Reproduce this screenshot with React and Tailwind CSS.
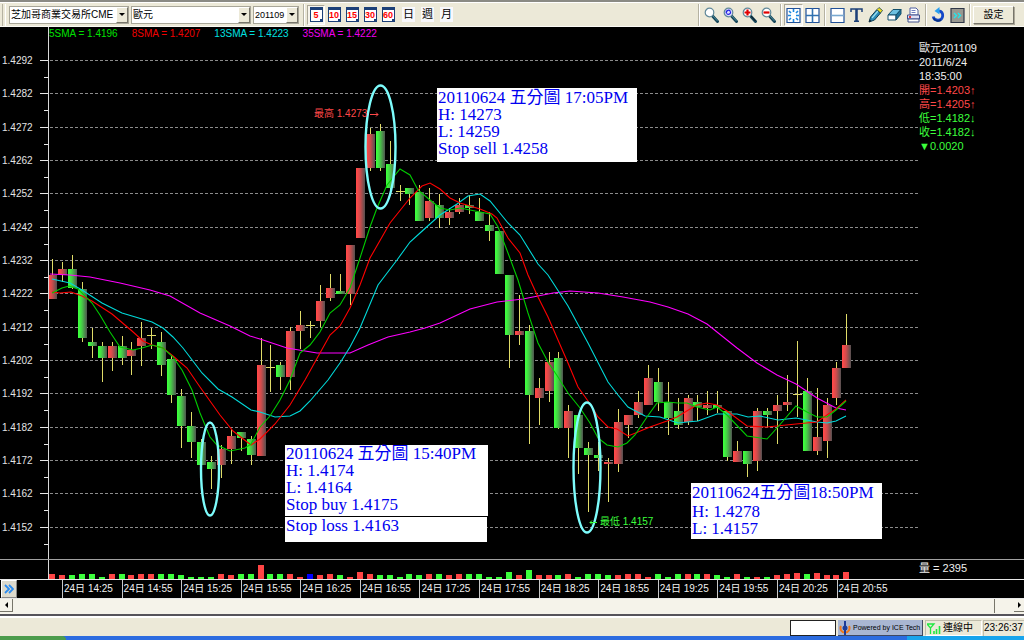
import React from 'react';

const SANS = 'font-["Liberation_Sans","Noto_Sans_CJK_TC",sans-serif]';

// [colour, high, body top, body bottom, low] in pips above 1.4000; r = up, g = down, d = doji
const CANDLES = [
  ['r', 232.3, 227.5, 220.3, 220.3], ['r', 231.5, 229.3, 227.4, 225.4], ['g', 233.6, 229.4, 223.5, 223.5],
  ['g', 225.5, 223.4, 208.5, 207.5], ['g', 211.7, 207.4, 206.3, 202.7], ['g', 207.4, 206.3, 202.5, 195.4],
  ['r', 207.3, 206.3, 202.5, 198.6], ['g', 209.2, 206.3, 202.5, 200.4], ['r', 207.4, 205.1, 203.3, 197.4],
  ['r', 213.5, 208.5, 206.3, 200.4], ['d', 211.7, 209.5, 209.5, 205.3], ['g', 210.5, 207.4, 200.4, 197.4],
  ['g', 203.3, 202.4, 191.4, 189.3], ['g', 193.3, 191.3, 182.3, 175.5], ['g', 186.4, 182.3, 177.4, 172.5],
  ['g', 178.3, 177.3, 170.6, 170.6], ['g', 173.3, 171.3, 169.4, 163.5], ['r', 176.6, 175.3, 170.6, 166.6],
  ['r', 181.2, 179.3, 175.4, 170.7], ['g', 180.4, 180.4, 178.6, 174.6], ['g', 179.3, 178.4, 173.4, 170.7],
  ['r', 208.7, 200.5, 173.3, 173.3], ['d', 206.5, 199.8, 199.8, 192.5], ['g', 201.5, 200.5, 196.8, 193.0],
  ['r', 211.8, 210.7, 196.8, 193.0], ['r', 216.8, 212.5, 210.7, 205.3], ['d', 213.7, 212.6, 212.6, 208.6],
  ['r', 224.5, 219.7, 213.8, 211.8], ['r', 227.8, 223.6, 220.5, 219.7], ['g', 227.8, 222.7, 221.7, 221.7],
  ['r', 236.5, 236.5, 221.9, 218.6], ['r', 259.6, 259.6, 238.5, 238.5], ['r', 271.6, 269.8, 259.6, 258.8],
  ['g', 272.8, 270.6, 259.6, 258.8], ['g', 267.6, 260.8, 253.6, 251.5], ['d', 254.6, 252.8, 252.8, 249.8],
  ['g', 253.6, 253.6, 251.7, 248.5], ['g', 254.5, 252.5, 243.8, 243.8], ['r', 253.6, 249.7, 244.6, 243.8],
  ['g', 251.7, 248.5, 244.6, 241.6], ['r', 247.5, 246.5, 244.6, 242.5], ['r', 250.5, 248.5, 246.5, 245.7],
  ['g', 251.5, 248.5, 247.5, 245.7], ['g', 250.5, 246.5, 243.8, 243.8], ['g', 246.5, 242.5, 240.7, 237.8],
  ['g', 240.7, 240.7, 227.8, 227.8], ['g', 227.6, 227.6, 209.4, 199.6], ['r', 221.6, 210.6, 209.4, 206.6],
  ['g', 212.5, 210.6, 191.4, 176.8], ['r', 196.7, 193.5, 190.5, 182.5], ['r', 204.5, 201.4, 192.6, 189.6],
  ['g', 204.5, 202.6, 181.5, 181.5], ['r', 188.5, 186.6, 181.5, 172.7], ['g', 185.4, 185.4, 175.5, 167.7],
  ['g', 177.5, 175.5, 173.4, 156.4], ['g', 177.5, 173.4, 172.6, 168.7], ['r', 172.7, 171.4, 170.7, 159.4],
  ['r', 187.4, 183.5, 170.7, 168.6], ['r', 185.4, 185.4, 182.4, 178.6], ['r', 192.6, 189.5, 185.4, 184.6],
  ['r', 200.4, 196.7, 188.4, 188.4], ['g', 199.6, 195.5, 189.5, 186.7], ['g', 195.5, 189.5, 184.5, 179.5],
  ['g', 190.7, 186.6, 182.4, 181.5], ['r', 191.4, 190.6, 183.5, 182.4], ['g', 191.4, 189.5, 187.9, 183.6],
  ['r', 192.6, 188.5, 187.6, 185.5], ['g', 192.7, 188.5, 187.6, 186.0], ['g', 186.7, 186.7, 172.8, 171.6],
  ['r', 177.7, 174.7, 171.5, 171.5], ['g', 174.7, 174.7, 170.8, 166.8], ['r', 187.6, 186.7, 171.6, 168.7],
  ['g', 187.6, 186.7, 185.5, 182.0], ['r', 191.5, 188.5, 186.7, 176.8], ['r', 197.5, 189.5, 188.6, 186.7],
  ['d', 207.6, 191.7, 191.7, 184.8], ['g', 196.7, 192.7, 174.7, 174.7], ['r', 193.6, 178.8, 174.7, 173.6],
  ['r', 190.7, 188.5, 177.6, 172.8], ['r', 201.5, 199.6, 190.7, 188.7], ['r', 215.7, 206.5, 199.6, 199.6],
];

const VOLUMES =
  'r5 r4 g4 g5 g5 g2 r5 g5 r4 r5 r5 g5 g5 g4 g2 g2 g2 r5 r4 g5 g5 r14 g5 g5 r5 r2 b5 r4 r5 g4 r2 r7 r5 g4 g4 g2 g5 g4 r5 g5 r4 r5 g5 g5 g2 g2 g7 r4 g9 r4 r4 g4 r5 g2 g5 g5 g4 r4 r5 r5 r2 g5 g2 g5 r5 g5 r5 g4 g2 r5 g2 r2 g2 r4 r5 r6 g5 r6 r4 r4 r7'
    .split(' ')
    .map((v) => [v[0], Number(v.slice(1))]);

const AVERAGES = [
  {
    color: '#f0f',
    points: '50,274 70,275 90,277 120,283 150,290 170,296 200,313 230,326 250,336 260,339 287,348 317,353 350,353 368,345 388,337 410,332 425,328 440,323 470,309 497,302 523,299 553,293 570,291 598,293 623,297 650,302 668,307 688,314 707,324 737,348 757,363 777,375 796,384 817,398 836,408 846,410',
  },
  {
    color: '#00dada',
    points: '52,279 70,283 82,290 102,303 122,313 142,319 152,322 163,328 173,337 183,348 202,373 218,389 232,397 251,410 260,412 275,417 290,416 300,411 310,401 328,380 340,363 350,347 360,328 378,285 397,260 410,242 420,233 440,215 457,204 468,196 480,194 490,201 508,223 520,235 538,264 548,275 568,306 588,343 608,382 618,395 628,407 645,416 660,417 678,423 687,422 698,421 717,414 737,414 748,417 760,416 778,420 796,418 817,422 827,423 836,421 846,416',
  },
  {
    color: '#f00',
    points: '52,292 60,293 71,292 82,296 92,301 112,314 132,331 143,341 152,345 163,348 173,356 187,368 200,387 220,415 233,431 251,445 260,439 275,424 290,405 305,380 320,353 330,335 340,326 350,308 360,285 370,258 390,223 410,198 422,186 430,183 440,189 450,198 460,203 480,209 492,214 497,218 508,238 520,253 528,275 538,297 548,317 558,340 568,363 578,387 588,401 598,417 608,427 617,429 628,436 638,432 650,427 667,421 677,417 690,409 697,405 707,403 717,405 727,411 747,426 767,427 796,424 817,422 827,415 836,409 846,400',
  },
  {
    color: '#0c0',
    points: '52,293 62,288 69,286 78,289 92,303 100,315 110,332 120,347 133,350 142,348 152,345 163,348 173,357 182,370 192,390 200,413 210,437 217,445 230,451 245,448 251,444 260,427 270,416 280,400 290,380 300,353 310,345 320,332 330,313 340,305 350,288 360,258 370,227 377,208 387,185 400,169 410,175 418,190 430,200 440,208 450,210 460,208 480,212 490,214 498,227 508,253 518,280 528,313 538,343 548,362 558,377 568,393 580,408 590,423 598,438 607,445 618,447 627,443 635,435 647,417 657,403 667,402 678,403 687,403 697,407 710,410 717,407 727,415 747,436 767,439 777,428 796,406 807,412 817,417 827,417 836,410 846,401',
  },
];

const LEGEND = [
  ['5SMA = 1.4196', 'text-[#00e000]'],
  ['8SMA = 1.4207', 'text-[#f00000]'],
  ['13SMA = 1.4223', 'text-[#00e0e0]'],
  ['35SMA = 1.4222', 'text-[#f000f0]'],
];

const TIMES = ['14:25', '14:55', '15:25', '15:55', '16:25', '16:55', '17:25', '17:55', '18:25', '18:55', '19:25', '19:55', '20:25', '20:55'];

const LEVELS = Array.from({ length: 15 }, (_, i) => 292 - i * 10);

const VOLUME_FILL = { r: '#ff4545', g: '#3cff3c', b: '#0000ff' };

const TOP = 27;
const xAt = (i) => 52 + i * 9.93;
const yAt = (pips) => 60 + (292 - pips) * 3.333;

function Candle({ candle, index }) {
  const [kind, high, top, bottom, low] = candle;
  const x = Math.round(xAt(index));
  const y = Math.round(yAt(top));
  return (
    <g>
      <rect x={x} y={Math.round(yAt(high))} width="1" height={Math.round((high - low) * 3.333)} fill="#e0dc68" />
      {kind === 'd' ? (
        <rect x={x - 4} y={y} width="9" height="1" fill="#e0dc68" />
      ) : (
        <rect x={x - 4} y={y} width="9" height={Math.max(2, Math.round(yAt(bottom)) - y)} fill={kind === 'r' ? 'url(#up)' : 'url(#down)'} />
      )}
    </g>
  );
}

function Chart() {
  return (
    <svg className="block h-[532px] w-full" role="img" aria-label="歐元 201109 K線圖">
      <defs>
        <linearGradient id="up">
          <stop offset="0.1" stopColor="#ff4848" />
          <stop offset="0.45" stopColor="#d04c4c" />
          <stop offset="1" stopColor="#545050" />
        </linearGradient>
        <linearGradient id="down">
          <stop offset="0.1" stopColor="#3cff3c" />
          <stop offset="0.45" stopColor="#48c848" />
          <stop offset="1" stopColor="#505450" />
        </linearGradient>
      </defs>
      <g transform={`translate(0 ${-TOP})`} shapeRendering="crispEdges">
        {LEVELS.map((level) => {
          const y = Math.round(yAt(level));
          return (
            <g key={level}>
              <line x1="50" x2="100%" y1={y + 0.5} y2={y + 0.5} stroke="#8c8c8c" strokeDasharray="3 2" />
              <rect x="40" y={y} width="8" height="1" fill="#e8e8e8" />
              <rect x="44" y={y + 17} width="4" height="1" fill="#e8e8e8" />
            </g>
          );
        })}
        {CANDLES.map((candle, i) => (
          <Candle key={i} candle={candle} index={i} />
        ))}
        <rect x="48" y="27" width="1" height="532" fill="#d8d8d8" />
      </g>
      <g transform={`translate(0 ${-TOP})`} fill="none">
        {AVERAGES.map((avg) => (
          <polyline key={avg.color} points={avg.points} stroke={avg.color} strokeWidth="1.1" />
        ))}
        <g stroke="#7dfcfc" strokeWidth="2.4">
          <ellipse cx="380.5" cy="147" rx="15" ry="61.5" />
          <ellipse cx="210" cy="469" rx="9" ry="46.5" />
          <ellipse cx="587" cy="467.5" rx="13.5" ry="65" />
        </g>
        <path d="M370 114.500h8m-2-2 2 2-2 2" stroke="#ff4848" />
        <path d="M597 522.500h-7m2-2-2 2 2 2" stroke="#3cff3c" />
      </g>
      <g transform={`translate(0 ${-TOP})`} className={`${SANS} text-[10px]`}>
        {LEVELS.map((level) => (
          <text key={level} x="2" y={Math.round(yAt(level)) + 4} fill="#e4e4e4">
            {`1.4${level}`}
          </text>
        ))}
        <text x="314" y="117" fill="#ff4848">最高 1.4273</text>
        <text x="600" y="525" fill="#3cff3c">最低 1.4157</text>
      </g>
    </svg>
  );
}

function Note({ className, lines }) {
  return (
    <div className={`absolute bg-white pl-px font-["Liberation_Serif","Noto_Sans_CJK_TC",serif] text-[17px] leading-[17px] whitespace-nowrap text-[#0000f0] ${className}`}>
      {lines.map((line) => (
        <p key={line}>{line}</p>
      ))}
    </div>
  );
}

function Picker({ label, value, className }) {
  return (
    <div className={`relative h-[18px] border border-[#a8a698] bg-white ${className}`}>
      <select aria-label={label} className="block h-4 w-full appearance-none bg-white pr-3 pl-px leading-4 text-black outline-none">
        <option>{value}</option>
      </select>
      <span className="pointer-events-none absolute top-0 right-0 flex h-4 w-3 items-center justify-center border border-[#fff] border-r-[#77756a] border-b-[#77756a] bg-[#ece9d8]">
        <svg viewBox="0 0 6 3" className="h-[3px] w-[6px]">
          <path d="M0 0h6L3 3z" />
        </svg>
      </span>
    </div>
  );
}

function Separator() {
  return (
    <span className="flex w-[6px] shrink-0 justify-center">
      <span className="h-[22px] w-0.5 border-r border-l border-r-white border-l-[#b5b2a2]" />
    </span>
  );
}

function PeriodButton({ value, active }) {
  return (
    <button
      aria-label={`${value}分`}
      className={`flex h-5 w-[18px] items-center justify-center ${active ? 'border border-[#aca899] border-r-white border-b-white bg-[#f6f4ec]' : ''}`}
    >
      <span className="relative flex h-[15px] w-[13px] items-center justify-center border border-t-[3px] border-[#1c4078] bg-white font-['Liberation_Sans',sans-serif] text-[9px] leading-none font-bold text-[#f00]">
        {value}
        <span className="absolute right-0 bottom-0 h-0.5 w-0.5 bg-[#1c4078]" />
      </span>
    </button>
  );
}

function ToolButton({ label, active, children }) {
  return (
    <button aria-label={label} className={`flex h-[22px] w-[19px] items-center justify-center ${active ? 'border border-[#aca899] border-r-white border-b-white bg-[#f6f4ec]' : ''}`}>
      <svg viewBox="0 0 15 16" className="h-4 w-[15px] shrink-0" fill="none">
        {children}
      </svg>
    </button>
  );
}

function Magnifier({ glass = '#fff', handle = '#4a8a98', children }) {
  return (
    <>
      <path d="m8.500 9 5 5.500" stroke="#16465a" strokeWidth="3" strokeLinecap="round" />
      <path d="m9 9 4.500 5" stroke={handle} strokeWidth="1" />
      <circle cx="5.500" cy="5.500" r="4.300" fill={glass} stroke="#61899a" strokeWidth="1.200" />
      {children}
    </>
  );
}

function Toolbar() {
  return (
    <header>
      <div className="h-[3px] border-b border-white bg-[#8a8a84]" />
      <div className="flex h-6 items-center border-b border-[#fbfaf4] bg-[#ece9d8] pr-[10px]">
        <span className="mr-px ml-0.5 h-[22px] w-px bg-[#b5b2a2]" />
        <span className="mr-[3px] ml-px h-[22px] w-px bg-white" />
        <div className={`flex gap-0.5 ${SANS}`}>
          <Picker label="交易所" value="芝加哥商業交易所CME" className="w-[120px] text-[10px]" />
          <Picker label="商品" value="歐元" className="w-[120px] text-[10px]" />
          <Picker label="月份" value="201109" className="w-[46px] text-[9px]" />
        </div>
        <span className="w-0.5" />
        <Separator />
        <div className="flex">
          {['5', '10', '15', '30', '60'].map((value, i) => (
            <PeriodButton key={value} value={value} active={i === 0} />
          ))}
        </div>
        <div className="ml-0.5 flex">
          {['日', '週', '月'].map((value) => (
            <button key={value} className="flex h-[18px] w-[19px] items-center justify-center">
              <span className={`flex h-[15px] w-[13px] items-center justify-center bg-[#f8f8fc] text-[11px] leading-none text-black ${SANS}`}>{value}</span>
            </button>
          ))}
        </div>

        <div className="ml-auto flex items-center">
          <Separator />
          <ToolButton label="放大鏡">
            <Magnifier />
          </ToolButton>
          <ToolButton label="還原縮放">
            <Magnifier glass="#dcdcff">
              <path d="M3.500 6.500a2.200 2.200 0 0 1 3.800-2.200M7.500 4.500a2.200 2.200 0 0 1-3.700 2.200" stroke="#2020e0" strokeWidth="1.200" />
            </Magnifier>
          </ToolButton>
          <ToolButton label="放大">
            <Magnifier handle="#101820">
              <path d="M2.500 5.500h6m-3-3v6" stroke="#e00000" strokeWidth="2.200" />
            </Magnifier>
          </ToolButton>
          <ToolButton label="縮小">
            <Magnifier>
              <path d="M2.500 5.500h6" stroke="#e00000" strokeWidth="2.200" />
            </Magnifier>
          </ToolButton>
          <Separator />
          <ToolButton label="全圖" active>
            <path d="M1 1.500h13v14H1z" fill="#fff" stroke="#205098" strokeWidth="1.200" />
            <path d="M7.500 2v3m0 7v3M2 8.500h3m5 0h3M3 4l2 2m7-2-2 2m-7 7 2-2m7 2-2-2" stroke="#1c88e0" strokeWidth="1.600" />
          </ToolButton>
          <ToolButton label="十字線">
            <path d="M1 1.500h13v14H1z" fill="#fff" stroke="#205098" strokeWidth="1.200" />
            <path d="M7.500 1.500v14M1 8.500h13" stroke="#2f70b0" strokeWidth="1.600" />
          </ToolButton>
          <Separator />
          <ToolButton label="分割">
            <path d="M1 1.500h13v14H1z" fill="#fff" stroke="#205098" strokeWidth="1.200" />
            <path d="M1 8.500h13" stroke="#78a8d0" strokeWidth="1.600" />
          </ToolButton>
          <ToolButton label="文字">
            <path d="M2 5V2h11v3M7.500 2v12M5 14.200h5" stroke="#1c4078" strokeWidth="1.500" />
            <path d="M7.500 2v12" stroke="#1c4078" strokeWidth="2.400" />
          </ToolButton>
          <ToolButton label="畫線">
            <path d="m1 15 1.500-5 6-7 4 3-6 7z" fill="#2c8ab8" stroke="#123c50" />
            <path d="m4 11 6-7" stroke="#9ce0f0" strokeWidth="1.200" />
            <path d="m9 2.500 2-2 3.500 3-2 2.500z" fill="#f0e020" stroke="#123c50" strokeWidth=".8" />
            <path d="m1 15 .8-2.500 1.700 1.500z" fill="#102030" />
          </ToolButton>
          <ToolButton label="橡皮擦">
            <path d="m1 8 5-5.500h8L9 8z" fill="#6cc0e0" stroke="#14506c" />
            <path d="M1 8h8v5H1z" fill="#fff" stroke="#14506c" />
            <path d="m9 8 5-5.500V7l-5 6z" fill="#1c7098" stroke="#14506c" />
          </ToolButton>
          <ToolButton label="列印">
            <path d="M4 1h6l2 2v5H4z" fill="#fff" stroke="#5060a0" />
            <path d="M5.500 3.500h4m-4 2h4" stroke="#7080c0" />
            <path d="M1.500 8h12v4h-12z" fill="#e0e0f4" stroke="#40508c" />
            <path d="M2 12h11v3H2z" fill="#fff" stroke="#40508c" />
            <path d="M3 10h2" stroke="#e00000" strokeWidth="1.400" />
          </ToolButton>
          <Separator />
          <ToolButton label="重新整理">
            <path d="M8 3.800a4.800 4.800 0 1 1-5.800 5.700" stroke="#1448c8" strokeWidth="2.800" />
            <path d="M2.500 11a5 5 0 0 0 7.500 2" stroke="#083080" strokeWidth="1.600" />
            <path d="M8.500 0v7.500L3.500 4z" fill="#28a0f0" />
          </ToolButton>
          <ToolButton label="展開">
            <path d="M1 1.500h13v14H1z" fill="#989890" stroke="#303848" strokeWidth="1.200" />
            <path d="m4 6 2.500 2.500L4 11m4-5 2.500 2.500L8 11" stroke="#20e8f0" strokeWidth="1.400" />
          </ToolButton>
          <Separator />
          <button className={`h-[18px] w-[41px] border border-white border-r-[#77756a] border-b-[#77756a] bg-[#ece9d8] text-[10px] leading-none text-black shadow-[1px_1px_0_#aca899] ${SANS}`}>設定</button>
        </div>
      </div>
    </header>
  );
}

function Quote() {
  return (
    <aside className={`w-[106px] shrink-0 pt-[14px] pl-px text-[11px] leading-[14px] text-[#f0f0f0] ${SANS}`}>
      <p>歐元201109</p>
      <p>2011/6/24</p>
      <p>18:35:00</p>
      <p className="text-[#ff4848]">開=1.4203↑</p>
      <p className="text-[#ff4848]">高=1.4205↑</p>
      <p className="text-[#3cff3c]">低=1.4182↓</p>
      <p className="text-[#3cff3c]">收=1.4182↓</p>
      <p className="text-[#3cff3c]">▼0.0020</p>
    </aside>
  );
}

function StatusBar() {
  return (
    <footer>
      <div className={`flex h-[18px] items-end justify-end bg-[#ece9d8] text-black ${SANS}`}>
        <input aria-label="訊息" className="mr-0.5 h-4 w-[46px] border border-[#222] bg-white px-1 text-[10px]" />
        <div className="flex h-4 w-[85px] items-center border-r border-b border-[#404860] bg-[#a9b6d2] pl-px">
          <svg viewBox="0 0 12 14" className="mr-0.5 h-[14px] w-3 shrink-0" fill="none">
            <path d="M2 5a4.500 4.500 0 1 0 8 0" stroke="#f07818" strokeWidth="2" />
            <path d="M6 0v14" stroke="#1c3c98" strokeWidth="2" />
            <circle cx="6" cy="7" r="2.500" fill="#1c3c98" />
          </svg>
          <span className="text-[7px] leading-none whitespace-nowrap">Powered by ICE Tech</span>
        </div>
        <div className="ml-0.5 flex h-4 w-[57px] items-center border border-[#c0bdac] border-r-white border-b-white text-[10px] leading-none">
          <svg viewBox="0 0 14 11" className="mr-0.5 ml-px h-[11px] w-[14px] shrink-0" fill="none" stroke="#20e840">
            <path d="M0 1h7L3.500 5zM3.500 4v7" strokeWidth="1.300" />
            <path d="M7 11V8m2.500 3V6m3 5V3" strokeWidth="1.600" />
          </svg>
          <span className="whitespace-nowrap">連線中</span>
        </div>
        <div className="ml-px h-4 w-[41px] border-t border-l border-[#c0bdac] text-[10px] leading-[14px] whitespace-nowrap">23:26:37</div>
      </div>
      <div className="flex h-1 bg-[#2c6ce0]">
        <span className="w-[66px] rounded-tr-[4px] bg-[#4c9c4c]" />
        <span className="ml-auto w-[117px] bg-[#18a4ec]" />
      </div>
    </footer>
  );
}

export default function App() {
  return (
    <div className="min-h-screen bg-black">
      <Toolbar />

      <main className="bg-black">
        <div className="flex">
          <section className="relative min-w-0 flex-1">
            <Chart />
            <div className={`absolute top-0 left-[49px] flex gap-[14px] text-[10px] leading-[14px] whitespace-nowrap ${SANS}`}>
              {LEGEND.map(([text, color]) => (
                <span key={text} className={color}>{text}</span>
              ))}
            </div>
            <Note className="top-[61px] left-[437px] h-[74px] w-[200px] pt-px" lines={['20110624 五分圖 17:05PM', 'H: 14273', 'L: 14259', 'Stop sell 1.4258']} />
            <Note className="top-[418px] left-[285px] h-[71px] w-[203px]" lines={['20110624 五分圖 15:40PM', 'H: 1.4174', 'L: 1.4164', 'Stop buy 1.4175']} />
            <Note className="top-[490px] left-[285px] h-[25px] w-[202px]" lines={['Stop loss 1.4163']} />
            <Note className="top-[456px] left-[691px] h-[56px] w-[191px] pt-px [&>p:first-child]:mb-0.5" lines={['20110624五分圖18:50PM', 'H: 1.4278', 'L: 1.4157']} />
          </section>
          <Quote />
        </div>

        <div className="flex h-5 border-t border-[#a0a0a0]">
          <svg className="h-[19px] min-w-0 flex-1" shapeRendering="crispEdges" role="img" aria-label="成交量">
            {VOLUMES.map(([kind, height], i) => (
              <rect key={i} x={Math.round(xAt(i)) - 3} y={19 - height} width="6" height={height} fill={VOLUME_FILL[kind]} />
            ))}
            <rect x="48" y="0" width="1" height="19" fill="#d8d8d8" />
          </svg>
          <p className={`w-[106px] pl-px text-[11px] leading-4 text-[#f0f0f0] ${SANS}`}>量 = 2395</p>
        </div>

        <div className="flex h-5 border-t border-b border-[#e8e8e8]">
          <button aria-label="展開面板" className="mr-[45px] ml-px flex w-4 items-center justify-center border border-white border-r-[#888] border-b-[#888] bg-[#dcd9cc]">
            <svg viewBox="0 0 10 10" className="h-[10px] w-[10px]" fill="none" stroke="#2c8cf0" strokeWidth="1.800">
              <path d="m1 1 4 4-4 4m4-8 4 4-4 4" />
            </svg>
          </button>
          <div className={`flex w-[834px] text-[10px] leading-[18px] text-[#f0f0f0] ${SANS}`}>
            {TIMES.map((time) => (
              <span key={time} className="flex-1 border-l border-[#c8c8c8] pl-px whitespace-nowrap">24日 {time}</span>
            ))}
          </div>
        </div>
      </main>

      <div className="flex h-[15px] bg-[#f5f3ea]">
        <button aria-label="向左捲動" className="flex h-[13px] w-[13px] items-center justify-center border-r border-b border-[#77756a]">
          <svg viewBox="0 0 3 6" className="h-[6px] w-[3px]"><path d="M3 0v6L0 3z" /></svg>
        </button>
        <div className="mr-[19px] h-[14px] flex-1 border-r border-[#77756a]" />
        <button aria-label="向右捲動" className="flex h-[13px] w-[10px] items-center justify-center border-b border-[#77756a]">
          <svg viewBox="0 0 3 6" className="h-[6px] w-[3px]"><path d="M0 0v6l3-3z" /></svg>
        </button>
      </div>
      <div className="h-1 border-t-2 border-[#55535a] bg-white" />

      <StatusBar />
    </div>
  );
}
